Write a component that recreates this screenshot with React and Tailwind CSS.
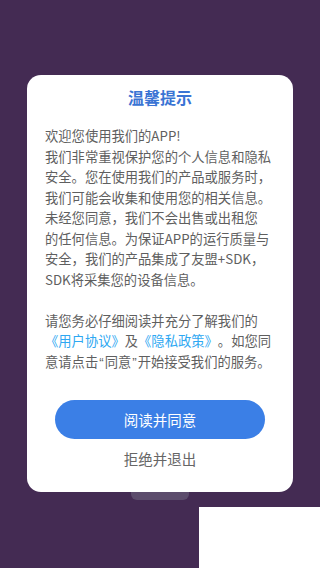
export default function App() {
  const font = { fontFamily: '"Noto Sans CJK SC", "Noto Sans", sans-serif' };
  return (
    <div className="w-[320px] h-[568px] bg-[#442b53] overflow-hidden pt-[75px] flex flex-col" style={font}>
      <div className="mx-auto w-[266px] bg-white rounded-[14px] pt-[10px] pb-[23px] flex flex-col">
        <div className="text-center text-[16px] leading-[24px] font-bold text-[#3a74d4]">温馨提示</div>
        <div className="mt-[17px] px-[18px] text-[13.3px] leading-[20.5px] text-[#5f5f5f] whitespace-nowrap [text-spacing-trim:space-all]">
          <div>欢迎您使用我们的APP!</div>
          <div>我们非常重视保护您的个人信息和隐私</div>
          <div>安全。您在使用我们的产品或服务时，</div>
          <div>我们可能会收集和使用您的相关信息。</div>
          <div>未经您同意，我们不会出售或出租您</div>
          <div>的任何信息。为保证APP的运行质量与</div>
          <div>安全，我们的产品集成了友盟+SDK，</div>
          <div>SDK将采集您的设备信息。</div>
          <div className="h-[20.5px]"></div>
          <div>请您务必仔细阅读并充分了解我们的</div>
          <div>
            <span className="text-[#2ea8f2]">《用户协议》</span>及<span className="text-[#2ea8f2]">《隐私政策》</span>。如您同
          </div>
          <div>
            意请点击<span className="font-['Liberation_Sans'] px-[1px]">“</span>同意<span className="font-['Liberation_Sans'] px-[1px]">”</span>开始接受我们的服务。
          </div>
        </div>
        <button className="mt-[27px] mx-auto w-[210px] h-[39px] rounded-full bg-[#3b7fe6] text-white text-[14.5px] flex items-center justify-center">
          阅读并同意
        </button>
        <div className="mt-[10px] text-center text-[14.5px] leading-[20px] text-[#666666]">拒绝并退出</div>
      </div>
      <div className="mx-auto w-[58px] h-[8px] rounded-b-[6px] bg-[#5c4c6c]"></div>
      <div className="mt-[7px] flex justify-end flex-1">
        <div className="w-[121px] bg-white"></div>
      </div>
    </div>
  );
}
